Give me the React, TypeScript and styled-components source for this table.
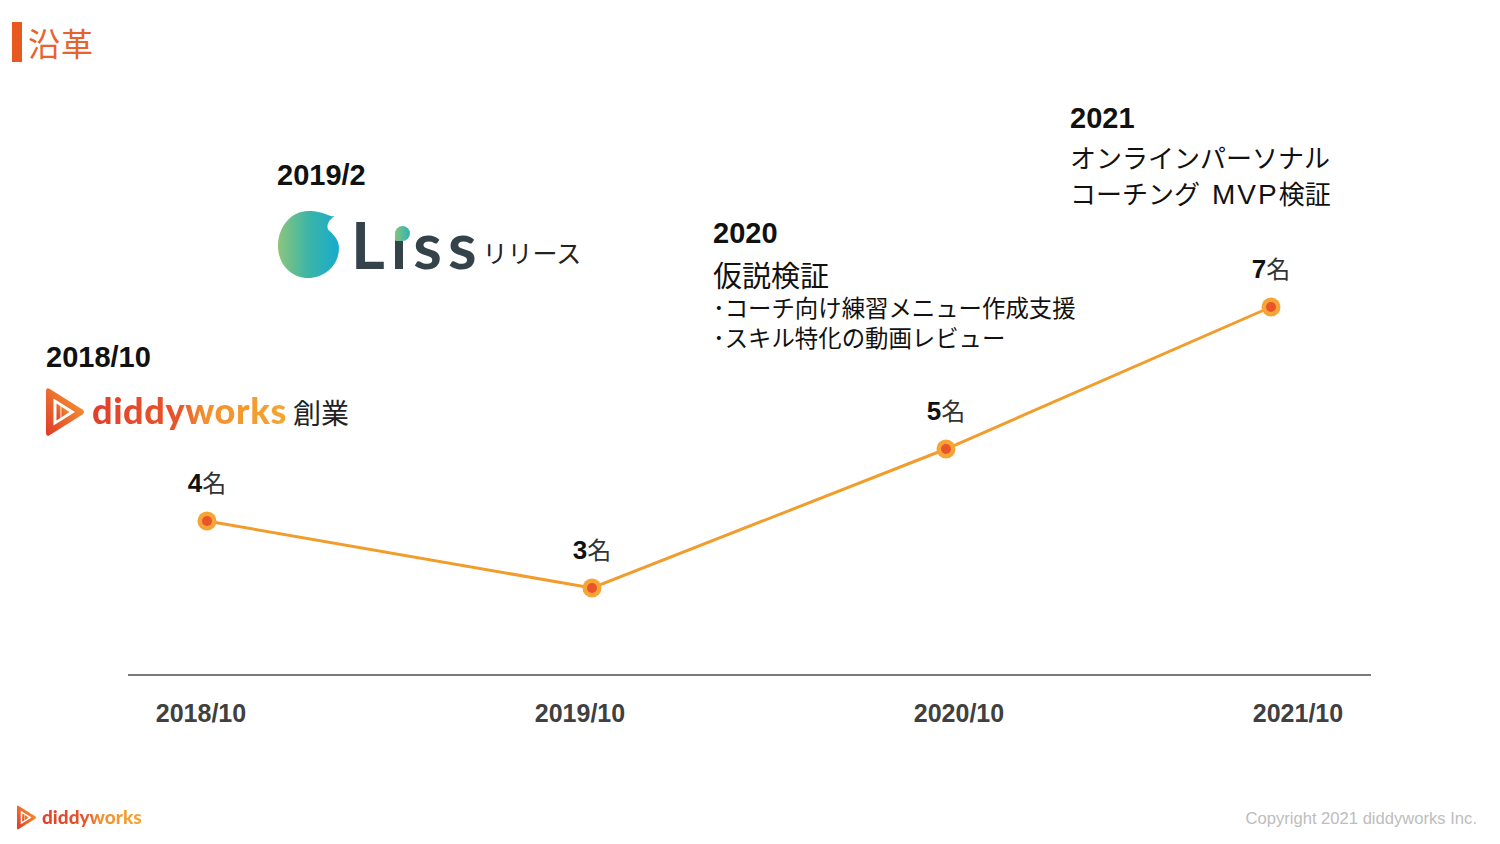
import React from "react";
import styled, {createGlobalStyle} from "styled-components";

const GlobalStyle = createGlobalStyle`
  html, body {
    margin: 0;
    padding: 0;
    background: #fff;
  }
  body {
    font-family: "Liberation Sans", "Noto Sans CJK JP", sans-serif;
    color: #111;
  }
`;

// chart data in stage coordinates
const points = [
  {x: 207, y: 441, count: "4", axis: "2018/10", axisX: 201},
  {x: 592, y: 508, count: "3", axis: "2019/10", axisX: 580},
  {x: 946, y: 369, count: "5", axis: "2020/10", axisX: 959},
  {x: 1271, y: 227, count: "7", axis: "2021/10", axisX: 1298},
];
const AXIS_Y = 595;

function DiddyIcon({w, h, id}: {w: number; h: number; id: string}) {
  return (
    <svg width={w} height={h} viewBox="0 0 38 48">
      <defs>
        <linearGradient id={id} x1="0" y1="1" x2="1" y2="0">
          <stop offset="0" stopColor="#e0392a" />
          <stop offset="1" stopColor="#f7a333" />
        </linearGradient>
      </defs>
      <path
        d="M3.5 0.8 L36.5 21.6 Q39.5 24 36.5 26.4 L3.5 47.2 Q0 49 0 45 V3 Q0 -1 3.5 0.8 Z"
        fill={`url(#${id})`}
      />
      <path d="M7.5 10.5 L29 24 L7.5 37.5 Z" fill="#fff" />
      <path d="M10.5 15.5 L23.5 24 L10.5 32.5 Z" fill={`url(#${id})`} />
      <rect x="14.2" y="16" width="1.4" height="16" fill="#fff" opacity="0.6" />
    </svg>
  );
}

function DiddyLogo({small}: {small?: boolean}) {
  return (
    <LogoRow $small={small}>
      <DiddyIcon w={small ? 19 : 38} h={small ? 25 : 48} id={small ? "dg-s" : "dg-l"} />
      <LogoWord $small={small}>diddyworks</LogoWord>
    </LogoRow>
  );
}

function LissBubble() {
  return (
    <svg width="64" height="69" viewBox="0 0 64 69">
      <defs>
        <linearGradient id="liss-g" x1="0" y1="0" x2="1" y2="0">
          <stop offset="0" stopColor="#8cc57c" />
          <stop offset="0.5" stopColor="#3bb5a6" />
          <stop offset="1" stopColor="#17abcc" />
        </linearGradient>
      </defs>
      <path
        d="M58 6 C53 9 49 14 51 19.5 C57 25 62 30 62 38 C62 55 48 68 31 68 C14 68 1 54 1 36 C1 16 15 1 31 1 C40 1 46 3 51 5 C54 6.5 56 6.5 58 6 Z"
        fill="url(#liss-g)"
      />
    </svg>
  );
}

export default function App() {
  return (
    <>
      <GlobalStyle />
      <Slide>
        <Header>
          <TitleBar />
          <Title>沿革</Title>
        </Header>

        <Stage>
          <ChartSvg width="1500" height="710" viewBox="0 0 1500 710">
            <line x1="128" y1={AXIS_Y} x2="1371" y2={AXIS_Y} stroke="#7a7a7a" strokeWidth="2" />
            <polyline
              points={points.map((p) => `${p.x},${p.y}`).join(" ")}
              fill="none"
              stroke="#f29c2c"
              strokeWidth="3"
            />
            {points.map((p) => (
              <g key={p.axis}>
                <circle cx={p.x} cy={p.y} r="9.5" fill="#f7a436" />
                <circle cx={p.x} cy={p.y} r="5" fill="#e8552b" />
              </g>
            ))}
          </ChartSvg>

          {points.map((p) => (
            <CountLabel key={p.axis} $x={p.x} $y={p.y - 40}>
              <Num>{p.count}</Num>
              <Unit>名</Unit>
            </CountLabel>
          ))}
          {points.map((p) => (
            <AxisLabel key={p.axis} $x={p.axisX}>
              {p.axis}
            </AxisLabel>
          ))}

          <Note $x={46} $y={261}>
            <Year>2018/10</Year>
            <FoundRow>
              <DiddyLogo />
              <FoundText>創業</FoundText>
            </FoundRow>
          </Note>

          <Note $x={277} $y={79}>
            <Year>2019/2</Year>
            <LissRow>
              <LissBubble />
              <LissWord>
                L<LissI>ı</LissI>ss
              </LissWord>
              <Release>リリース</Release>
            </LissRow>
          </Note>

          <Note $x={713} $y={137}>
            <Year>2020</Year>
            <NoteHead>仮説検証</NoteHead>
            <Bullet>･コーチ向け練習メニュー作成支援</Bullet>
            <Bullet>･スキル特化の動画レビュー</Bullet>
          </Note>

          <Note $x={1070} $y={22}>
            <Year>2021</Year>
            <NoteLines>
              <span>オンラインパーソナル</span>
              <span>
                コーチング<Latin>MVP</Latin>検証
              </span>
            </NoteLines>
          </Note>
        </Stage>

        <Footer>
          <DiddyLogo small />
          <Copyright>Copyright 2021 diddyworks Inc.</Copyright>
        </Footer>
      </Slide>
    </>
  );
}

const Slide = styled.div`
  width: 1500px;
  height: 844px;
  display: flex;
  flex-direction: column;
  overflow: hidden;
`;

const Header = styled.header`
  height: 80px;
  box-sizing: border-box;
  padding: 22px 0 0 12px;
  display: flex;
  align-items: flex-start;
  gap: 6px;
`;

const TitleBar = styled.div`
  width: 10px;
  height: 40px;
  background: #e8591f;
`;

const Title = styled.h1`
  margin: 0;
  font-family: "Noto Sans CJK JP", sans-serif;
  font-weight: 400;
  font-size: 32px;
  line-height: 40px;
  color: #e8622c;
  letter-spacing: 1px;
`;

const Stage = styled.main`
  position: relative;
  height: 710px;
`;

const ChartSvg = styled.svg`
  position: absolute;
  left: 0;
  top: 0;
`;

const CountLabel = styled.div<{$x: number; $y: number}>`
  position: absolute;
  left: ${({$x}) => $x}px;
  top: ${({$y}) => $y}px;
  transform: translate(-50%, -50%);
  display: flex;
  align-items: baseline;
  white-space: nowrap;
`;

const Num = styled.span`
  font-weight: 700;
  font-size: 26px;
  color: #111;
`;

const Unit = styled.span`
  font-family: "Noto Sans CJK JP", sans-serif;
  font-size: 24px;
  color: #333;
`;

const AxisLabel = styled.div<{$x: number}>`
  position: absolute;
  left: ${({$x}) => $x}px;
  top: ${AXIS_Y + 38}px;
  transform: translate(-50%, -50%);
  font-weight: 700;
  font-size: 25px;
  color: #404040;
  white-space: nowrap;
`;

const Note = styled.div<{$x: number; $y: number}>`
  position: absolute;
  left: ${({$x}) => $x}px;
  top: ${({$y}) => $y}px;
  display: flex;
  flex-direction: column;
  white-space: nowrap;
`;

const Year = styled.div`
  font-weight: 700;
  font-size: 29px;
  line-height: 32px;
  color: #111;
`;

const NoteHead = styled.div`
  margin-top: 7px;
  font-family: "Noto Sans CJK JP", sans-serif;
  font-size: 29px;
  line-height: 36px;
  color: #111;
`;

const Bullet = styled.div`
  font-family: "Noto Sans CJK JP", sans-serif;
  font-size: 23.4px;
  line-height: 30px;
  color: #111;
`;

const NoteLines = styled.div`
  margin-top: 8px;
  display: flex;
  flex-direction: column;
  font-size: 26px;
  line-height: 35px;
  color: #111;
`;

const Latin = styled.span`
  margin: 0 0 0 12px;
  font-size: 28px;
  letter-spacing: 2px;
`;

const FoundRow = styled.div`
  margin-top: 15px;
  display: flex;
  align-items: center;
  gap: 6px;
`;

const FoundText = styled.span`
  font-family: "Noto Sans CJK JP", sans-serif;
  font-size: 28px;
  color: #222;
`;

const LogoRow = styled.div<{$small?: boolean}>`
  display: flex;
  align-items: center;
  gap: ${({$small}) => ($small ? 6 : 8)}px;
`;

const LogoWord = styled.span<{$small?: boolean}>`
  font-family: Lato, "Open Sans", sans-serif;
  font-weight: 900;
  font-size: ${({$small}) => ($small ? 19 : 36)}px;
  line-height: 1;
  letter-spacing: ${({$small}) => ($small ? 0 : 0.6)}px;
  padding-bottom: ${({$small}) => ($small ? 2 : 4)}px;
  background: linear-gradient(90deg, #e23f2a 0%, #e9552b 45%, #f28f2e 58%, #f5a531 100%);
  -webkit-background-clip: text;
  background-clip: text;
  color: transparent;
`;

const LissRow = styled.div`
  margin-top: 19px;
  display: flex;
  align-items: center;
`;

const LissWord = styled.span`
  margin-left: 10px;
  font-family: Lato, sans-serif;
  font-weight: 700;
  font-size: 65px;
  line-height: 1;
  letter-spacing: 6px;
  color: #34424a;
`;

const LissI = styled.span`
  position: relative;
  &::before {
    content: "";
    position: absolute;
    left: 4px;
    bottom: 42px;
    width: 15px;
    height: 15px;
    border-radius: 50% 50% 50% 10%;
    background: linear-gradient(90deg, #86c47c, #2fb2b6);
  }
`;

const Release = styled.span`
  align-self: flex-end;
  margin: 0 0 9px 0;
  font-family: "Noto Sans CJK JP", sans-serif;
  font-size: 25px;
  color: #222;
`;

const Footer = styled.footer`
  height: 54px;
  box-sizing: border-box;
  padding: 0 23px 0 17px;
  display: flex;
  align-items: center;
  justify-content: space-between;
`;

const Copyright = styled.span`
  padding-top: 4px;
  font-size: 16.6px;
  color: #bdbdbd;
`;
